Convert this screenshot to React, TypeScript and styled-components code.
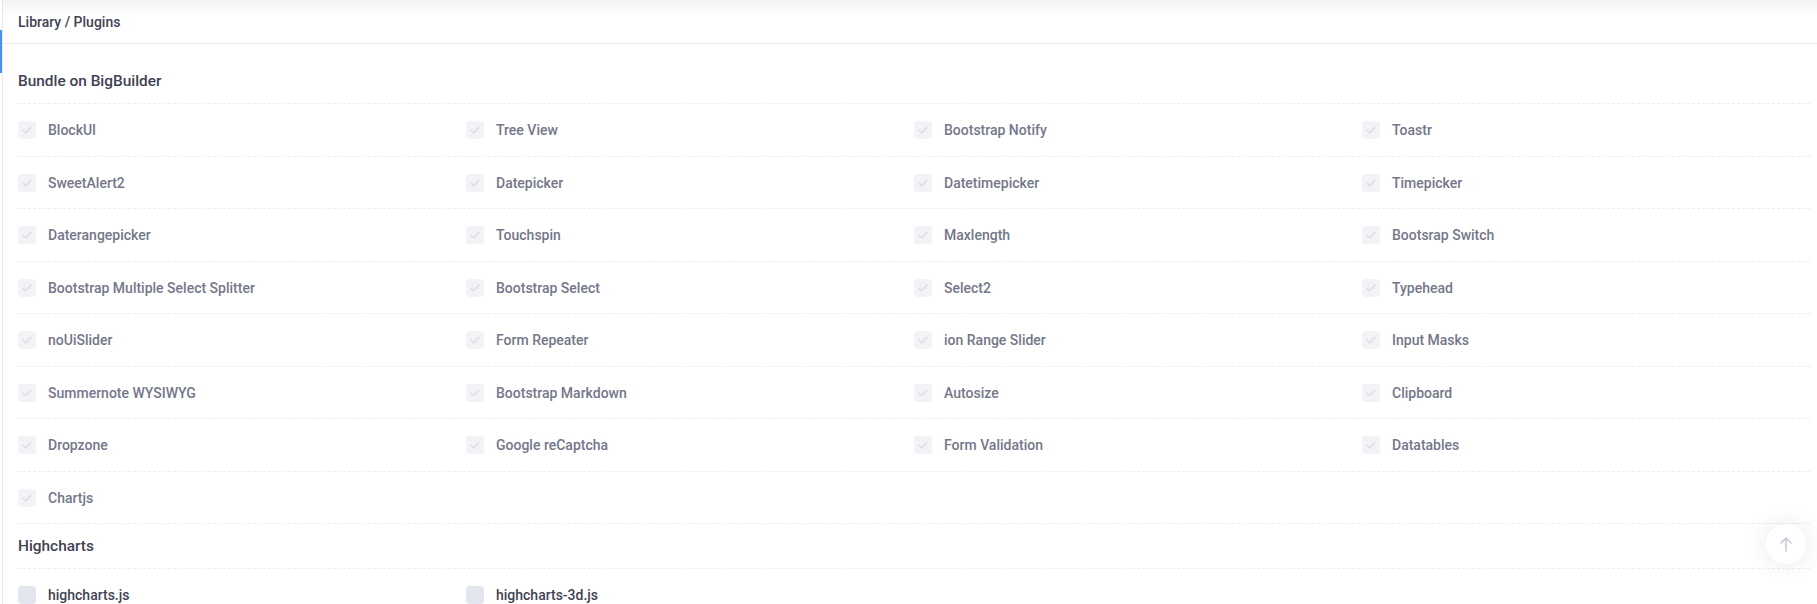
import { createGlobalStyle } from "styled-components";
import styled from "styled-components";

const GlobalStyle = createGlobalStyle`
  html, body {
    margin: 0;
    padding: 0;
    background: #ffffff;
  }
  body {
    font-family: Roboto, "Liberation Sans", Arial, sans-serif;
    -webkit-font-smoothing: antialiased;
    overflow: hidden;
  }
`;

const Page = styled.div`
  display: flex;
  min-height: 604px;
`;

const Rail = styled.div`
  width: 2px;
  flex: 0 0 2px;
  border-right: 1px solid #e6e6ef;
`;

const RailMark = styled.div`
  width: 2px;
  height: 43px;
  margin-top: 30px;
  background: #3699ff;
`;

const Main = styled.div`
  flex: 1;
  min-width: 0;
`;

const Header = styled.div`
  height: 43px;
  display: flex;
  align-items: center;
  padding-left: 15px;
  border-bottom: 1px solid #ebedf3;
  background: linear-gradient(#f4f4f4 0px, #ffffff 16px);
  font-size: 14px;
  font-weight: 500;
  color: #3f4254;
`;

const Content = styled.div`
  padding: 15px 7px 0 15px;
`;

const SectionTitle = styled.div`
  padding: 12px 0;
  line-height: 20px;
  font-size: 15.4px;
  font-weight: 500;
  color: #3f4254;
  border-bottom: 1px dashed #ebedf3;
`;

const Row = styled.div`
  display: grid;
  grid-template-columns: repeat(4, 1fr);
  height: 51.5px;
  border-bottom: 1px dashed #ebedf3;
`;

const Item = styled.label<{ $active?: boolean }>`
  display: flex;
  align-items: center;
  gap: 12px;
  padding-top: 1px;
  font-size: 14px;
  font-weight: 500;
  color: ${(p) => (p.$active ? "#3f4254" : "#74778a")};
`;

const Box = styled.span<{ $checked?: boolean }>`
  width: 18px;
  height: 18px;
  flex: 0 0 18px;
  border-radius: 4px;
  background: ${(p) => (p.$checked ? "#f3f3f7" : "#e4e6ef")};
  display: flex;
  align-items: center;
  justify-content: center;
`;

const ScrollTop = styled.button`
  position: fixed;
  right: 11px;
  top: 524px;
  width: 40px;
  height: 40px;
  border-radius: 50%;
  border: none;
  background: #ffffff;
  box-shadow: 0 0 22px rgba(60, 60, 90, 0.12);
  display: flex;
  align-items: center;
  justify-content: center;
  padding: 0;
`;

const bundle = [
  "BlockUI", "Tree View", "Bootstrap Notify", "Toastr",
  "SweetAlert2", "Datepicker", "Datetimepicker", "Timepicker",
  "Daterangepicker", "Touchspin", "Maxlength", "Bootsrap Switch",
  "Bootstrap Multiple Select Splitter", "Bootstrap Select", "Select2", "Typehead",
  "noUiSlider", "Form Repeater", "ion Range Slider", "Input Masks",
  "Summernote WYSIWYG", "Bootstrap Markdown", "Autosize", "Clipboard",
  "Dropzone", "Google reCaptcha", "Form Validation", "Datatables",
  "Chartjs",
];

const highcharts = ["highcharts.js", "highcharts-3d.js"];

function chunk(list: string[]) {
  const rows: string[][] = [];
  for (let i = 0; i < list.length; i += 4) rows.push(list.slice(i, i + 4));
  return rows;
}

function Check() {
  return (
    <svg width="10" height="8" viewBox="0 0 10 8" fill="none">
      <path d="M1 4.2L3.7 6.8L9 1.2" stroke="#dcdce6" strokeWidth="1.5" strokeLinecap="round" strokeLinejoin="round" />
    </svg>
  );
}

function Section({ title, items, checked }: { title: string; items: string[]; checked: boolean }) {
  return (
    <>
      <SectionTitle>{title}</SectionTitle>
      {chunk(items).map((row, i) => (
        <Row key={i}>
          {row.map((name) => (
            <Item key={name} $active={!checked}>
              <Box $checked={checked}>{checked && <Check />}</Box>
              {name}
            </Item>
          ))}
        </Row>
      ))}
    </>
  );
}

export default function App() {
  return (
    <>
      <GlobalStyle />
      <Page>
        <Rail>
          <RailMark />
        </Rail>
        <Main>
          <Header>Library / Plugins</Header>
          <Content>
            <Section title="Bundle on BigBuilder" items={bundle} checked />
            <Section title="Highcharts" items={highcharts} checked={false} />
          </Content>
        </Main>
      </Page>
      <ScrollTop aria-label="Scroll to top">
        <svg width="14" height="16" viewBox="0 0 14 16" fill="none">
          <path d="M7 15V2M2 7l5-5 5 5" stroke="#c9c7dc" strokeWidth="1.6" strokeLinecap="round" strokeLinejoin="round" />
        </svg>
      </ScrollTop>
    </>
  );
}
